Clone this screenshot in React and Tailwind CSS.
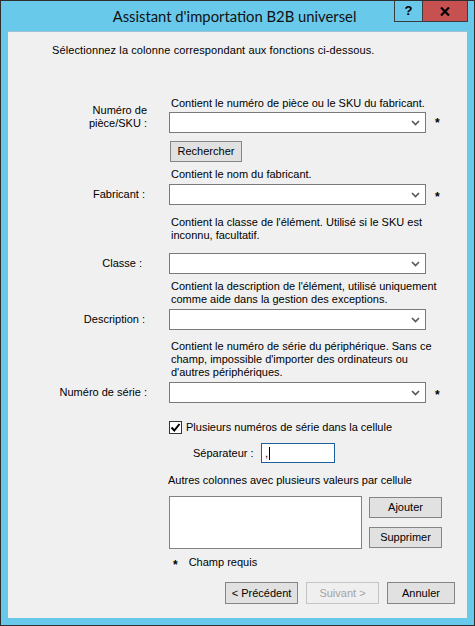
import React from "react";

const Chevron = () => (
    <svg width="9" height="6" viewBox="0 0 9 6">
        <path d="M1 1l3.5 3.5L8 1" stroke="#5a5a5a" strokeWidth="1.7" fill="none" />
    </svg>
);

const Combo = () => (
    <div className="w-[257px] h-[21px] bg-white border border-[#7a7a7a] flex items-center justify-end pr-[5px]">
        <Chevron />
    </div>
);

const Star = () => (
    <span className="inline-block font-bold text-[12px] leading-[13px] translate-y-[3px]">*</span>
);

const Btn = ({ children, w, disabled }) => (
    <div
        className={
            disabled
                ? "h-[22px] flex items-center justify-center bg-[#efefef] border border-[#c4c4c4] text-[#a3a3a3] " + w
                : "h-[22px] flex items-center justify-center bg-[#e1e1e1] border border-[#858585] " + w
        }
    >
        {children}
    </div>
);

const FieldRow = ({ label, pr, two, required }) => (
    <div className={two ? "flex items-start" : "flex items-center"}>
        <div className={"w-[139px] text-right " + pr + (two ? " -mt-[8px]" : "")}>{label}</div>
        <div className="ml-[22px]">
            <Combo />
        </div>
        {required && (
            <div className={"ml-[9px]" + (two ? " mt-[2px]" : "")}>
                <Star />
            </div>
        )}
    </div>
);

const Desc = ({ children, mt }) => <div className={"ml-[163px] " + mt}>{children}</div>;

export default function App() {
    return (
        <div className="w-[475px] h-[626px] bg-[#69c9ea] border border-[#2f2f2f] flex flex-col">
            {/* title bar */}
            <div className="h-[30px] flex">
                <div className="flex-1" />
                <div className="pt-[5px] text-[14.8px] leading-[20px] text-[#111] font-['Lato',sans-serif] whitespace-nowrap">
                    Assistant d'importation B2B universel
                </div>
                <div className="flex-1 flex justify-end pr-[6px]">
                    <div className="w-[28px] h-[21px] border-l border-b border-[#3c3c3c] flex items-center justify-center font-bold text-[13px] font-['Liberation_Sans',sans-serif]">
                        ?
                    </div>
                    <div className="w-[46px] h-[21px] bg-[#c75050] border-l border-r border-b border-[#3c3c3c] flex items-center justify-center">
                        <svg width="10" height="9" viewBox="0 0 10 9">
                            <path d="M1 0.5l8 8M9 0.5l-8 8" stroke="#000" strokeWidth="2.2" />
                        </svg>
                    </div>
                </div>
            </div>

            {/* client area */}
            <div className="mx-[7px] h-[587px] bg-[#f0f0f0] border-t border-[#9cc3d3] flex flex-col text-[11px] leading-[13px] text-black font-['Liberation_Sans',Arial,sans-serif]">
                <div className="mt-[12px] ml-[44px] tracking-[0.1px]">
                    Sélectionnez la colonne correspondant aux fonctions ci-dessous.
                </div>

                <Desc mt="mt-[40px]">Contient le numéro de pièce ou le SKU du fabricant.</Desc>
                <div className="mt-[2px]">
                    <FieldRow
                        label={
                            <>
                                Numéro de
                                <br />
                                pièce/SKU :
                            </>
                        }
                        pr=""
                        two
                        required
                    />
                </div>
                <div className="mt-[8px] ml-[162px] w-[72px] h-[21px] flex items-center justify-center bg-[#e1e1e1] border border-[#858585]">
                    Rechercher
                </div>

                <Desc mt="mt-[6px]">Contient le nom du fabricant.</Desc>
                <div className="mt-[3px]">
                    <FieldRow label="Fabricant :" pr="pr-[2px]" required />
                </div>

                <Desc mt="mt-[11px]">
                    Contient la classe de l'élément. Utilisé si le SKU est
                    <br />
                    inconnu, facultatif.
                </Desc>
                <div className="mt-[11px]">
                    <FieldRow label="Classe :" pr="pr-[5px]" />
                </div>

                <Desc mt="mt-[6px]">
                    Contient la description de l'élément, utilisé uniquement
                    <br />
                    comme aide dans la gestion des exceptions.
                </Desc>
                <div className="mt-[3px]">
                    <FieldRow label="Description :" pr="pr-[2px]" />
                </div>

                <Desc mt="mt-[10px]">
                    Contient le numéro de série du périphérique. Sans ce
                    <br />
                    champ, impossible d'importer des ordinateurs ou
                    <br />
                    d'autres périphériques.
                </Desc>
                <div className="mt-[3px]">
                    <FieldRow label="Numéro de série :" pr="" required />
                </div>

                <div className="mt-[18px] ml-[161px] flex items-center">
                    <div className="w-[13px] h-[13px] bg-white border border-[#333] flex items-center justify-center">
                        <svg width="11" height="11" viewBox="0 0 11 11">
                            <path d="M1.5 5.5l2.8 3L9.5 2" stroke="#000" strokeWidth="2" fill="none" />
                        </svg>
                    </div>
                    <div className="ml-[4px]">Plusieurs numéros de série dans la cellule</div>
                </div>

                <div className="mt-[9px] ml-[185px] flex items-center">
                    <div className="w-[68px]">Séparateur :</div>
                    <div className="w-[74px] h-[20px] bg-white border border-[#1c5f9e] flex items-center pl-[3px]">
                        <span>,</span>
                        <span className="w-px h-[13px] bg-black ml-[1px]" />
                    </div>
                </div>

                <div className="mt-[11px] ml-[160px]">Autres colonnes avec plusieurs valeurs par cellule</div>

                <div className="mt-[9px] ml-[161px] flex">
                    <div className="w-[193px] h-[53px] bg-white border border-[#828282]" />
                    <div className="ml-[7px] flex flex-col">
                        <div className="mt-[1px] w-[73px] h-[21px] flex items-center justify-center bg-[#e1e1e1] border border-[#858585]">
                            Ajouter
                        </div>
                        <div className="mt-[9px] w-[73px] h-[21px] flex items-center justify-center bg-[#e1e1e1] border border-[#858585]">
                            Supprimer
                        </div>
                    </div>
                </div>

                <div className="mt-[7px] ml-[165px] flex items-start">
                    <Star />
                    <div className="ml-[11px]">Champ requis</div>
                </div>

                <div className="mt-[13px] ml-[217px] flex gap-[8px]">
                    <Btn w="w-[73px]">&lt; Précédent</Btn>
                    <Btn w="w-[73px]" disabled>
                        Suivant &gt;
                    </Btn>
                    <Btn w="w-[68px]">Annuler</Btn>
                </div>
            </div>
        </div>
    );
}
